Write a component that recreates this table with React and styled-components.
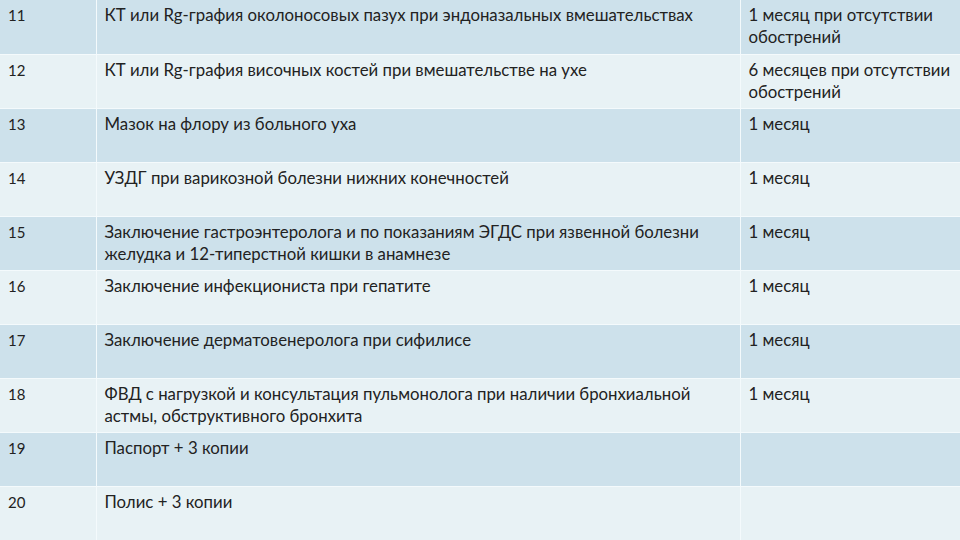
import React from 'react'
import styled, { createGlobalStyle } from 'styled-components'

const Global = createGlobalStyle`
  html, body { margin: 0; padding: 0; background: #e9f2f5; }
  body { width: 960px; height: 540px; overflow: hidden; }
`

const Table = styled.table`
  width: 960px;
  border-collapse: collapse;
  table-layout: fixed;
  font-family: Lato, "Noto Sans", sans-serif;
  font-size: 16.8px;
  color: #222;
`

const Col = styled.col`
  width: ${(p) => p.$w}px;
`

const Row = styled.tr`
  height: 54px;
  background: ${(p) => (p.$dark ? '#cde1eb' : '#e8f2f5')};
`

const Cell = styled.td`
  vertical-align: top;
  padding: 4px 8px 0 8px;
  line-height: 22px;
  border: 1.5px solid #f4fafc;
  border-top: none;
  &:first-child { border-left: none; font-size: 15px; }
  &:last-child { border-right: none; }
`

const rows = [
  ['11', 'КТ или Rg-графия околоносовых пазух при эндоназальных вмешательствах', '1 месяц при отсутствии обострений'],
  ['12', 'КТ или Rg-графия височных костей при вмешательстве на ухе', '6 месяцев при отсутствии обострений'],
  ['13', 'Мазок на флору из больного уха', '1 месяц'],
  ['14', 'УЗДГ при варикозной болезни нижних конечностей', '1 месяц'],
  ['15', 'Заключение гастроэнтеролога и по показаниям ЭГДС при язвенной болезни желудка и 12-типерстной кишки в анамнезе', '1 месяц'],
  ['16', 'Заключение инфекциониста при гепатите', '1 месяц'],
  ['17', 'Заключение дерматовенеролога при сифилисе', '1 месяц'],
  ['18', 'ФВД с нагрузкой и консультация пульмонолога при наличии бронхиальной астмы, обструктивного бронхита', '1 месяц'],
  ['19', 'Паспорт + 3 копии', ''],
  ['20', 'Полис + 3 копии', ''],
]

export default function App() {
  return (
    <>
      <Global />
      <Table>
        <colgroup>
          <Col $w={96} />
          <Col $w={644} />
          <Col $w={220} />
        </colgroup>
        <tbody>
          {rows.map(([n, what, term], i) => (
            <Row key={n} $dark={i % 2 === 0}>
              <Cell>{n}</Cell>
              <Cell>{what}</Cell>
              <Cell>{term}</Cell>
            </Row>
          ))}
        </tbody>
      </Table>
    </>
  )
}
